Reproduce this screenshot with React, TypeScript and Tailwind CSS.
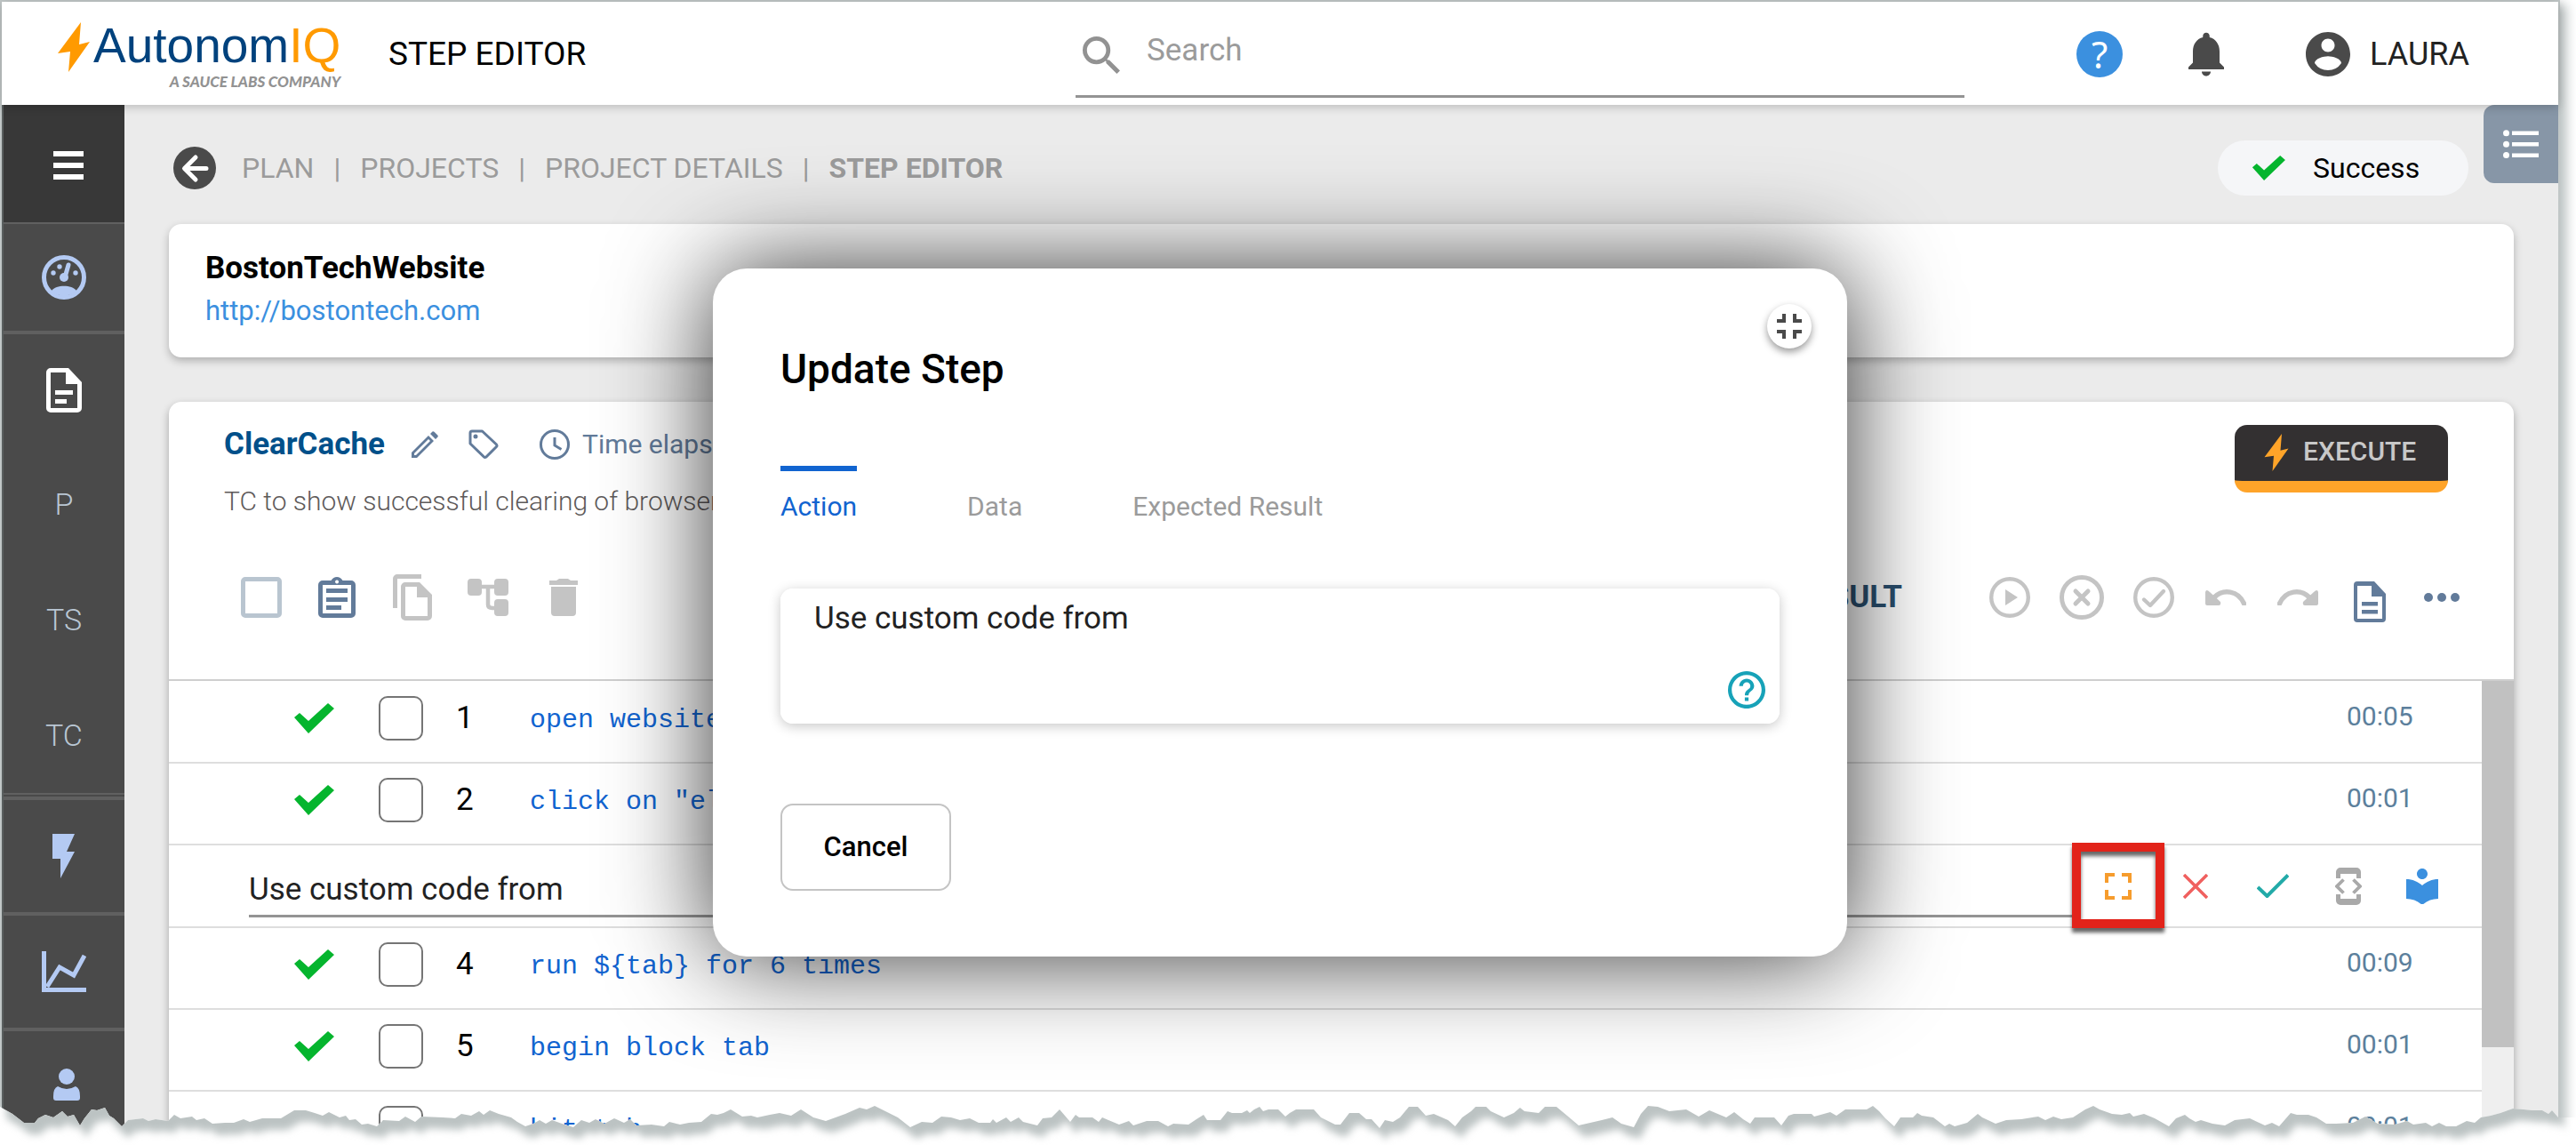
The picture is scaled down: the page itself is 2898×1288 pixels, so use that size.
import React, { type ReactNode } from "react";

type IconProps = { box: string; className: string; children: ReactNode };

function Icon({ box, className, children }: IconProps) {
  return (
    <svg viewBox={box} className={`shrink-0 ${className}`} fill="currentColor" aria-hidden="true">
      {children}
    </svg>
  );
}

function Bolt({ className }: { className: string }) {
  return (
    <Icon box="0 0 36 56" className={className}>
      <path d="M26 0 L0 35 L14 33 L12 56 L36 22 L24 25 Z" />
    </Icon>
  );
}

function CheckMark({ className }: { className: string }) {
  return (
    <Icon box="0 0 46 34" className={className}>
      <path d="M1 16 L7 11 L17 20 L39 0 L46 6 L17 34 Z" />
    </Icon>
  );
}

/* ---------- header ---------- */

function Logo() {
  return (
    <div className="flex items-start pl-[63px] text-[#00427d]">
      <Bolt className="mt-[5px] h-[56px] w-[36px] text-[#ff9a00]" />
      <div className="ml-1 flex flex-col items-end">
        <span className="font-['Liberation_Sans'] text-[55px] leading-[62px]">
          Autonom<span className="text-[#ff9a00]">IQ</span>
        </span>
        <span className="font-[Lato] text-[17px] leading-[20px] font-black italic text-[#929292]">
          A SAUCE LABS COMPANY
        </span>
      </div>
    </div>
  );
}

function Header() {
  return (
    <header className="relative z-10 flex h-[116px] shrink-0 items-center bg-white pt-[2px] shadow-[0_2px_10px_rgba(0,0,0,0.22)]">
      <div className="flex w-[1208px] shrink-0 items-center">
        <div className="w-[435px]">
          <Logo />
        </div>
        <h1 className="text-[37px] leading-[48px] text-black">STEP EDITOR</h1>
      </div>
      <label className="flex h-[106px] flex-1 items-center self-start border-b-[3px] border-[#949494] pt-[4px] pl-[8px]">
        <Icon box="3 3 17.5 17.5" className="mt-[8px] h-[42px] w-[42px] text-[#929292]">
          <path d="M15.5 14h-.79l-.28-.27A6.471 6.471 0 0 0 16 9.5 6.5 6.5 0 1 0 9.5 16c1.61 0 3.09-.59 4.23-1.57l.27.28v.79l5 4.99L20.49 19l-4.99-5zm-6 0C7.01 14 5 11.99 5 9.5S7.01 5 9.5 5 14 7.01 14 9.5 11.99 14 9.5 14z" />
        </Icon>
        <input
          type="text"
          aria-label="Search"
          placeholder="Search"
          className="ml-[30px] h-[50px] min-w-0 flex-1 bg-transparent text-[35px] text-[#222] outline-none placeholder:text-[#9b9b9b]"
        />
      </label>
      <div className="flex w-[668px] shrink-0 items-center pl-[126px]">
        <button type="button" aria-label="Help" className="flex h-[52px] w-[52px] items-center justify-center rounded-full bg-[#3b90df] font-['Noto_Sans'] text-[42px] leading-[52px] text-white">
          ?
        </button>
        <button type="button" aria-label="Notifications" className="ml-[74px]">
          <Icon box="4 2.5 16 19.5" className="h-[50px] w-[40px] text-[#4a4a4a]">
            <path d="M12 22c1.1 0 2-.9 2-2h-4c0 1.1.89 2 2 2zm6-6v-5c0-3.07-1.64-5.64-4.5-6.32V4c0-.83-.67-1.5-1.5-1.5s-1.5.67-1.5 1.5v.68C7.63 5.36 6 7.92 6 11v5l-2 2v1h16v-1l-2-2z" />
          </Icon>
        </button>
        <button type="button" className="ml-[92px] flex items-center text-[36px] leading-[44px] text-[#222]">
          <Icon box="2 2 20 20" className="mr-[22px] h-[50px] w-[50px] text-[#4a4a4a]">
            <path d="M12 2C6.48 2 2 6.48 2 12s4.48 10 10 10 10-4.48 10-10S17.52 2 12 2zm0 3c1.66 0 3 1.34 3 3s-1.34 3-3 3-3-1.34-3-3 1.34-3 3-3zm0 14.2a7.2 7.2 0 0 1-6-3.22c.03-1.99 4-3.08 6-3.08 1.99 0 5.97 1.09 6 3.08a7.2 7.2 0 0 1-6 3.22z" />
          </Icon>
          LAURA
        </button>
      </div>
    </header>
  );
}

/* ---------- side navigation ---------- */

function SideNav() {
  const link = "flex h-[130px] shrink-0 items-center justify-center";
  const ruled = "flex h-[130px] shrink-0 items-center justify-center border-b-4 border-[#606060]";
  return (
    <nav className="flex w-[138px] shrink-0 flex-col border-l-2 border-[#5a5f5f] bg-[#4a4a4a] text-[34px] font-light text-[#b9c6d3]">
      <button type="button" aria-label="Menu" className="flex h-[134px] shrink-0 items-center justify-center border-b-2 border-[#606060] bg-[#383838] pt-[3px] pl-[10px] text-white">
        <Icon box="0 0 34 32" className="h-[32px] w-[34px]">
          <path d="M0 0h34v6H0zM0 13h34v6H0zM0 26h34v6H0z" />
        </Icon>
      </button>
      <a href="#dashboard" aria-label="Dashboard" className="flex h-[124px] shrink-0 items-center justify-center border-b-4 border-[#606060] text-[#b4caf3]">
        <svg viewBox="0 0 50 50" className="h-[50px] w-[50px]" aria-hidden="true">
          <circle cx="25" cy="25" r="22.5" fill="none" stroke="currentColor" strokeWidth="5" />
          <path d="M11 40 C16 33 34 33 39 40 C35 47 15 47 11 40Z" fill="currentColor" />
          <path d="M30 11 L26 25" stroke="currentColor" strokeWidth="5" strokeLinecap="round" />
          <circle cx="25" cy="25" r="5" fill="currentColor" />
          <circle cx="13" cy="20" r="2.7" fill="currentColor" />
          <circle cx="20" cy="13" r="2.7" fill="currentColor" />
          <circle cx="38" cy="20" r="2.7" fill="currentColor" />
        </svg>
      </a>
      <a href="#documents" aria-label="Documents" className="flex h-[126px] shrink-0 items-center justify-center text-white">
        <Icon box="0 0 40 50" className="h-[50px] w-[40px]">
          <path fillRule="evenodd" d="M5 0H25L40 16V45a5 5 0 0 1-5 5H5a5 5 0 0 1-5-5V5a5 5 0 0 1 5-5ZM5 5V45H35V18H22V5Z" />
          <path d="M10 25H30V30H10ZM10 35H23V40H10Z" />
        </Icon>
      </a>
      <a href="#plans" className={link}>P</a>
      <a href="#suites" className={link}>TS</a>
      <a href="#cases" className={link}>TC</a>
      <div className="h-[8px] shrink-0 border-t-2 border-b-4 border-[#606060]" />
      <a href="#runs" aria-label="Executions" className={`${ruled} text-[#b4caf3]`}>
        <Icon box="0 0 26 50" className="h-[50px] w-[26px]">
          <path d="M0 0H25L16 20H25L9 50V28H0Z" />
        </Icon>
      </a>
      <a href="#reports" aria-label="Reports" className={`${ruled} text-[#b4caf3]`}>
        <svg viewBox="0 0 50 46" className="h-[46px] w-[50px]" fill="none" stroke="currentColor" strokeWidth="5" aria-hidden="true">
          <path d="M2.500 0V43.500H50" />
          <path d="M6 40L20 18L36 27L48 5" />
        </svg>
      </a>
      <a href="#account" aria-label="Users" className="flex h-[120px] shrink-0 items-center justify-center pl-[5px] text-[#b4caf3]">
        <Icon box="0 0 30 36" className="h-[36px] w-[30px]">
          <circle cx="15" cy="9" r="9" />
          <path d="M5 20Q15 26 25 20Q30 22 30 31V33a3 3 0 0 1-3 3H3a3 3 0 0 1-3-3V31Q0 22 5 20Z" />
        </Icon>
      </a>
    </nav>
  );
}

/* ---------- breadcrumb ---------- */

function Breadcrumb() {
  return (
    <div className="flex h-[134px] shrink-0 items-center justify-between pt-2">
      <nav aria-label="Breadcrumb" className="flex items-center gap-[22px] text-[32px] leading-[40px] text-[#9b9b9b]">
        <button type="button" aria-label="Back" className="mr-[7px] ml-[5px]">
          <svg viewBox="0 0 48 48" className="h-[48px] w-[48px]" aria-hidden="true">
            <circle cx="24" cy="24" r="24" fill="#4a4a4a" />
            <path d="M37 24.500H13M25 12L12.500 24.500L25 37" fill="none" stroke="#fff" strokeWidth="5" strokeLinecap="round" strokeLinejoin="round" />
          </svg>
        </button>
        <a href="#plan">PLAN</a>
        <span>|</span>
        <a href="#projects">PROJECTS</a>
        <span>|</span>
        <a href="#project-details">PROJECT DETAILS</a>
        <span>|</span>
        <span className="font-bold">STEP EDITOR</span>
      </nav>
      <div className="mr-[51px] flex h-[62px] w-[282px] items-center rounded-full bg-[#f5f6f8] pl-[37px] text-[32px] leading-[40px] text-black">
        <CheckMark className="mr-[30px] h-[28px] w-[40px] text-[#05b52e]" />
        Success
      </div>
    </div>
  );
}

/* ---------- toolbars ---------- */

function Tool({ label, width, children }: { label: string; width: string; children: ReactNode }) {
  return (
    <button type="button" aria-label={label} className={`flex h-[60px] items-center justify-center ${width}`}>
      {children}
    </button>
  );
}

function EditTools() {
  const w = "w-[85px]";
  return (
    <div className="flex items-center pl-[61px] text-[#c4c4c4]">
      <label className="flex w-[85px] items-center justify-center">
        <input type="checkbox" aria-label="Select all steps" className="h-[46px] w-[46px] appearance-none rounded-[5px] border-[5px] border-[#b9c5d0]" />
      </label>
      <Tool label="Paste" width={w}>
        <Icon box="0 0 42 46" className="h-[46px] w-[42px] text-[#627b9a]">
          <path fillRule="evenodd" d="M5 4H14.500Q17 0 21 0T27.500 4H37a5 5 0 0 1 5 5V41a5 5 0 0 1-5 5H5a5 5 0 0 1-5-5V9a5 5 0 0 1 5-5ZM5 9V41H37V9ZM21 3.500a2 2 0 1 0 .1 0Z" />
          <path d="M9 13H33V18H9ZM9 23H33V28H9ZM9 32H26V37H9Z" />
        </Icon>
      </Tool>
      <Tool label="Copy" width={w}>
        <Icon box="0 0 44 52" className="h-[52px] w-[44px]">
          <path d="M5 0H32V5H5V38H0V5a5 5 0 0 1 5-5Z" />
          <path fillRule="evenodd" d="M14 9H30L44 23V47a5 5 0 0 1-5 5H14a5 5 0 0 1-5-5V14a5 5 0 0 1 5-5ZM14 14V47H39V26H27V14Z" />
        </Icon>
      </Tool>
      <Tool label="Add block" width={w}>
        <Icon box="0 0 46 42" className="h-[42px] w-[46px]">
          <rect x="0" y="0" width="16" height="19" rx="4" />
          <rect x="30" y="0" width="16" height="19" rx="4" />
          <rect x="30" y="23" width="16" height="19" rx="4" />
          <path d="M15 9H31M23 9V29Q23 33 28 33H31" fill="none" stroke="currentColor" strokeWidth="4.500" />
        </Icon>
      </Tool>
      <Tool label="Delete" width={w}>
        <Icon box="0 0 32 42" className="h-[42px] w-[32px]">
          <path d="M0 2H8L11 0H21L24 2H32V7H0ZM2 9H30V38a4 4 0 0 1-4 4H6a4 4 0 0 1-4-4Z" />
        </Icon>
      </Tool>
    </div>
  );
}

function RunTools() {
  const w = "w-[81px]";
  const line = { fill: "none", stroke: "currentColor", strokeLinecap: "round", strokeLinejoin: "round" } as const;
  return (
    <div className="flex items-center pr-[41px] text-[#c4c4c4]">
      <span className="mr-[80px] text-[35px] leading-[40px] font-bold text-[#2b5070]">EXPECTED RESULT</span>
      <Tool label="Run" width={w}>
        <Icon box="0 0 46 46" className="h-[46px] w-[46px]">
          <circle cx="23" cy="23" r="20.800" {...line} strokeWidth="4.400" />
          <path d="M18 14L32 23L18 32Z" />
        </Icon>
      </Tool>
      <Tool label="Fail" width={w}>
        <Icon box="0 0 50 50" className="h-[50px] w-[50px]">
          <circle cx="25" cy="25" r="22.500" {...line} strokeWidth="5" />
          <path d="M18 18L32 32M32 18L18 32" {...line} strokeWidth="5" />
        </Icon>
      </Tool>
      <Tool label="Pass" width={w}>
        <Icon box="0 0 46 46" className="h-[46px] w-[46px]">
          <circle cx="23" cy="23" r="20.800" {...line} strokeWidth="4.400" />
          <path d="M12 25.500L19 32L34 16" {...line} strokeWidth="4.400" />
        </Icon>
      </Tool>
      <Tool label="Undo" width={w}>
        <Icon box="0 0 46 18" className="h-[18px] w-[46px]">
          <path d="M0 3Q1 -1 5 3L17 14Q18 18 15 18H2Q0 18 0 16Z" />
          <path d="M10 9C20 -1 37 1 43.500 16" {...line} strokeWidth="5.500" />
        </Icon>
      </Tool>
      <Tool label="Redo" width={w}>
        <Icon box="0 0 46 18" className="h-[18px] w-[46px]">
          <path d="M46 3Q45 -1 41 3L29 14Q28 18 31 18H44Q46 18 46 16Z" />
          <path d="M36 9C26 -1 9 1 2.500 16" {...line} strokeWidth="5.500" />
        </Icon>
      </Tool>
      <Tool label="Notes" width={w}>
        <Icon box="0 0 36 46" className="mt-[10px] h-[46px] w-[36px] text-[#627b9a]">
          <path fillRule="evenodd" d="M4 0H23L36 14V42a4 4 0 0 1-4 4H4a4 4 0 0 1-4-4V4a4 4 0 0 1 4-4ZM4 5V42H32V17H20V5Z" />
          <path d="M9 23H27V27.500H9ZM9 32H27V36.500H9Z" />
        </Icon>
      </Tool>
      <Tool label="More" width={w}>
        <Icon box="0 0 40 10" className="h-[10px] w-[40px] text-[#627b9a]">
          <circle cx="5" cy="5" r="5" />
          <circle cx="20" cy="5" r="5" />
          <circle cx="35" cy="5" r="5" />
        </Icon>
      </Tool>
    </div>
  );
}

/* ---------- steps table ---------- */

type Step = { id: number; text: string; time: string };
const before: Step[] = [
  { id: 1, text: "open website", time: "00:05" },
  { id: 2, text: 'click on "element"', time: "00:01" },
];
const after: Step[] = [
  { id: 4, text: "run ${tab} for 6 times", time: "00:09" },
  { id: 5, text: "begin block tab", time: "00:01" },
  { id: 6, text: "hit tab", time: "00:01" },
];

function StepRow({ step }: { step: Step }) {
  return (
    <tr className="h-[92px] border-b-2 border-[#dedede]">
      <td className="pb-2 pl-[140px]">
        <CheckMark className="h-[34px] w-[46px] text-[#05b52e]" />
      </td>
      <td className="pb-2 pl-[26px]">
        <input type="checkbox" aria-label={`Select step ${step.id}`} className="block h-[50px] w-[50px] appearance-none rounded-[10px] border-2 border-[#757575]" />
      </td>
      <td className="pb-2 pl-[11px] text-[35px] leading-[40px] text-black">{step.id}</td>
      <td className="pb-1 font-['Liberation_Mono'] text-[30px] leading-[40px] whitespace-nowrap text-[#1164d0]">{step.text}</td>
      <td className="pb-3 text-[30px] leading-[36px] text-[#5c7f9c]">{step.time}</td>
    </tr>
  );
}

function EditRow() {
  return (
    <tr className="h-[92px] border-b-2 border-[#dedede]">
      <td colSpan={5} className="p-0">
        <div className="flex h-[91px] items-center pr-[26px] pl-[90px]">
          <input
            type="text"
            aria-label="Step text"
            defaultValue="Use custom code from"
            className="mt-[10px] h-[60px] min-w-0 flex-1 border-b-[3px] border-[#949494] text-[35px] text-[#222] outline-none"
          />
          <button type="button" aria-label="Expand" className="relative flex h-[90px] w-[86px] items-center justify-center text-[#f69c2d]">
            <Icon box="0 0 30 30" className="h-[30px] w-[30px]">
              <path d="M0 0H11V4H4V11H0ZM19 0H30V11H26V4H19ZM0 19H4V26H11V30H0ZM26 19H30V30H19V26H26Z" />
            </Icon>
            <span className="absolute -top-[4px] -right-[9px] -bottom-[2px] -left-[9px] border-[10px] border-[#e2231a] shadow-[0_5px_4px_rgba(0,0,0,0.6),inset_0_5px_4px_rgba(0,0,0,0.6)]" />
          </button>
          <button type="button" aria-label="Discard" className="flex w-[88px] items-center justify-center text-[#f0605f]">
            <Icon box="0 0 28 28" className="h-[28px] w-[28px]">
              <path d="M1 1L27 27M27 1L1 27" stroke="currentColor" strokeWidth="3.500" />
            </Icon>
          </button>
          <button type="button" aria-label="Save" className="flex w-[86px] items-center justify-center text-[#22aaa8]">
            <Icon box="0 0 36 27" className="h-[27px] w-[36px]">
              <path d="M1 15L11.500 25L35 1.500" fill="none" stroke="currentColor" strokeWidth="4" />
            </Icon>
          </button>
          <button type="button" aria-label="Code" className="flex w-[84px] items-center justify-center text-[#a9a9a9]">
            <Icon box="0 0 30 42" className="h-[42px] w-[30px]">
              <path d="M6 0H24a5 5 0 0 1 5 5V12H24V7H6V12H1V5a5 5 0 0 1 5-5ZM1 30H6V35H24V30H29V37a5 5 0 0 1-5 5H6a5 5 0 0 1-5-5Z" />
              <path d="M9.500 13.500L2 21L9.500 28.500M20.500 13.500L28 21L20.500 28.500" fill="none" stroke="currentColor" strokeWidth="3.800" />
            </Icon>
          </button>
          <button type="button" aria-label="Library" className="flex w-[82px] items-center justify-center text-[#3b90df]">
            <Icon box="3 2 18 20" className="h-[40px] w-[36px]">
              <path d="M12 11.550C9.640 9.350 6.480 8 3 8v11c3.480 0 6.640 1.350 9 3.550 2.360-2.190 5.520-3.550 9-3.550V8c-3.480 0-6.640 1.350-9 3.550zM12 8c1.660 0 3-1.340 3-3s-1.340-3-3-3-3 1.340-3 3 1.340 3 3 3z" />
            </Icon>
          </button>
        </div>
      </td>
    </tr>
  );
}

function StepsPanel() {
  return (
    <section className="mt-[50px] flex min-h-0 flex-1 flex-col rounded-t-[14px] bg-white shadow-[0_4px_10px_rgba(0,0,0,0.3)]">
      <div className="flex shrink-0 items-start justify-between pt-[20px] pr-[74px] pl-[62px]">
        <div>
          <div className="flex h-[56px] items-center text-[#627b9a]">
            <h2 className="text-[35px] leading-[44px] font-bold text-[#00508a]">ClearCache</h2>
            <button type="button" aria-label="Rename" className="ml-[30px]">
              <Icon box="0 0 30 30" className="h-[30px] w-[30px]">
                <path fillRule="evenodd" d="M0 24L19 5L25 11L6 30H0ZM3 25V27H5L21 11L19 9ZM21 3L23.500 .5Q24.500 0 25.500 .8L29.500 4.800Q30 5.600 29.500 6.500L27 9Z" />
              </Icon>
            </button>
            <button type="button" aria-label="Tags" className="ml-[34px]">
              <svg viewBox="0 0 34 34" className="h-[34px] w-[34px]" fill="none" stroke="currentColor" strokeWidth="3" strokeLinejoin="round" aria-hidden="true">
                <path d="M2 4Q2 2 4 2H15.500L31.500 17Q32.500 18.500 31.500 19.500L20 31Q18.500 32 17.500 31L2 16Z" />
                <circle cx="8" cy="8" r="1.500" fill="currentColor" strokeWidth="2" />
              </svg>
            </button>
            <svg viewBox="0 0 34 34" className="ml-[46px] h-[34px] w-[34px]" fill="none" stroke="currentColor" strokeWidth="3" aria-hidden="true">
              <circle cx="17" cy="17" r="15.500" />
              <path d="M17 9V18L24.500 22.500" />
            </svg>
            <span className="ml-[14px] text-[30px] leading-[40px]">Time elapsed</span>
          </div>
          <p className="text-[30px] leading-[72px] font-light text-[#5e5a5a]">TC to show successful clearing of browser</p>
        </div>
        <button type="button" className="mt-[6px] flex h-[76px] w-[240px] items-start rounded-[14px] border-b-[13px] border-[#ffa429] bg-[#333031] pt-[10px] pl-[32px] text-[30px] leading-[40px] font-medium text-[#c8c8c8]">
          <Bolt className="mr-[15px] h-[42px] w-[30px] text-[#ffa429]" />
          EXECUTE
        </button>
      </div>
      <div className="flex h-[166px] shrink-0 items-start justify-between border-b-2 border-[#cfcfcf] pt-[42px]">
        <EditTools />
        <RunTools />
      </div>
      <div className="flex min-h-0 flex-1 overflow-hidden">
        <div className="min-w-0 flex-1">
          <table className="w-full table-fixed border-collapse text-left">
            <colgroup>
              <col className="w-[210px]" />
              <col className="w-[102px]" />
              <col className="w-[94px]" />
              <col />
              <col className="w-[152px]" />
            </colgroup>
            <tbody>
              {before.map((s) => <StepRow key={s.id} step={s} />)}
              <EditRow />
              {after.map((s) => <StepRow key={s.id} step={s} />)}
            </tbody>
          </table>
        </div>
        <div className="w-[36px] shrink-0 bg-[#efefef]">
          <div className="h-[412px] bg-[#c1c1c1]" />
        </div>
      </div>
    </section>
  );
}

/* ---------- dialog ---------- */

function UpdateStepDialog() {
  return (
    <div role="dialog" aria-labelledby="dialog-title" className="pointer-events-auto relative w-[1276px] rounded-[38px] bg-white px-[76px] pt-[83px] pb-[74px] shadow-[0_0_116px_rgba(0,0,0,0.8)]">
      <button type="button" aria-label="Collapse" className="absolute top-[40px] right-[40px] flex h-[50px] w-[50px] items-center justify-center rounded-full bg-white text-[#4a4a4a] shadow-[0_4px_9px_rgba(0,0,0,0.4)]">
        <Icon box="0 0 28 28" className="h-[28px] w-[28px]">
          <path d="M6 0H10V10H0V6H6ZM18 0H22V6H28V10H18ZM0 18H10V28H6V22H0ZM18 18H28V22H22V28H18Z" />
        </Icon>
      </button>
      <h2 id="dialog-title" className="text-[46px] leading-[60px] font-medium text-black">Update Step</h2>
      <div role="tablist" className="mt-[79px] flex gap-[124px] text-[30px] leading-[32px] text-[#9b9b9b]">
        <button type="button" role="tab" aria-selected="true" className="border-t-[6px] border-[#1164d0] pt-[24px] text-[#1164d0]">Action</button>
        <button type="button" role="tab" aria-selected="false" className="border-t-[6px] border-transparent pt-[24px]">Data</button>
        <button type="button" role="tab" aria-selected="false" className="border-t-[6px] border-transparent pt-[24px]">Expected Result</button>
      </div>
      <div className="relative mt-[76px] h-[152px] rounded-[14px] shadow-[0_3px_14px_rgba(0,0,0,0.22)]">
        <textarea
          aria-label="Action"
          defaultValue="Use custom code from"
          className="block h-full w-full resize-none rounded-[14px] bg-white px-[38px] pt-[12px] text-[35px] leading-[44px] text-[#222] outline-none"
        />
        <button type="button" aria-label="Action help" className="absolute right-[16px] bottom-[17px]">
          <Icon box="2 2 20 20" className="h-[42px] w-[42px] text-[#17a2b8]">
            <path d="M11 18h2v-2h-2v2zm1-16C6.480 2 2 6.480 2 12s4.480 10 10 10 10-4.480 10-10S17.520 2 12 2zm0 18c-4.410 0-8-3.590-8-8s3.590-8 8-8 8 3.590 8 8-3.590 8-8 8zm0-14c-2.210 0-4 1.790-4 4h2c0-1.100.9-2 2-2s2 .9 2 2c0 2-3 1.750-3 5h2c0-2.250 3-2.500 3-5 0-2.210-1.790-4-4-4z" />
          </Icon>
        </button>
      </div>
      <button type="button" className="mt-[90px] flex h-[98px] w-[192px] items-center justify-center rounded-[14px] border-2 border-[#c4c4c4] text-[31px] leading-[40px] font-medium text-black">
        Cancel
      </button>
    </div>
  );
}

/* ---------- torn paper edge ---------- */

type Profile = { start: number; scale: number; base: number; points: number[][] };

// Height profile of the tear, in thirds of a pixel below each section's base.
const profiles: Profile[] = [
  {
    start: 0, scale: 1.4255, base: -318,
    points: [[0,1155],[10,1168],[20,1180],[38,1208],[55,1208],[62,1195],[72,1183],[85,1190],[100,1170],[108,1187],[118,1183],[128,1218],[135,1195],[147,1165],[155,1168],[168,1157],[175,1185],[182,1195],[195,1222],[205,1200],[230,1195],[238,1203],[250,1197],[270,1203],[280,1183],[290,1195],[308,1188],[315,1200],[328,1195],[340,1212],[360,1208],[375,1210],[390,1198],[400,1205],[420,1193],[450,1195],[472,1168],[490,1168],[505,1177],[518,1185],[528,1172],[545,1190],[555,1186],[560,1200],[570,1197],[580,1215],[590,1212],[605,1220],[615,1200],[640,1203],[650,1188],[665,1207],[675,1187],[710,1190],[730,1193],[740,1180],[755,1185],[768,1170],[775,1182],[785,1168],[800,1180],[820,1190],[830,1205],[842,1222],[855,1213],[865,1200],[875,1212],[885,1200],[905,1215],[920,1225],[932,1200],[945,1210],[955,1198],[970,1213],[985,1195],[1000,1210],[1010,1197],[1020,1218],[1045,1215],[1065,1222],[1073,1205],[1090,1215],[1105,1210],[1125,1207],[1140,1180],[1150,1183],[1160,1175],[1172,1165],[1190,1188],[1205,1185],[1215,1192],[1235,1183],[1250,1175],[1268,1185],[1285,1163],[1305,1190],[1325,1203],[1340,1190],[1355,1180],[1378,1158],[1390,1165],[1402,1153],[1425,1175],[1440,1192],[1460,1225],[1478,1205],[1495,1208],[1510,1188],[1525,1190],[1540,1200],[1555,1195],[1567,1205]],
  },
  {
    start: 1100, scale: 1.568, base: -118,
    points: [[2,610],[22,610],[26,597],[33,610],[50,592],[58,605],[72,592],[80,607],[105,617],[115,593],[130,590],[144,563],[163,605],[172,583],[178,592],[202,592],[213,605],[220,590],[230,600],[250,615],[266,603],[275,618],[298,602],[318,602],[335,622],[345,612],[372,614],[385,597],[398,583],[405,600],[428,600],[440,570],[448,577],[465,575],[475,568],[480,575],[487,565],[497,555],[503,570],[512,563],[530,563],[542,587],[550,575],[562,563],[592,563],[605,590],[630,615],[640,615],[655,575],[672,575],[685,597],[695,597],[708,627],[718,600],[732,605],[745,592],[760,555],[776,555],[790,585],[805,580],[830,600],[842,622],[855,592],[870,570],[878,555],[897,555],[905,570],[928,592],[945,575],[957,558],[965,570],[990,575],[1000,555],[1020,555],[1040,585],[1060,617],[1080,610],[1100,600],[1120,590],[1135,612],[1157,625],[1170,580],[1183,553],[1200,555],[1220,570],[1250,565],[1272,587],[1290,567],[1320,590],[1335,572],[1350,597],[1362,612],[1370,592],[1405,592],[1417,618],[1430,585],[1440,580],[1470,580],[1475,588],[1503,573],[1515,585],[1530,565],[1555,565]],
  },
  {
    start: 2030, scale: 1.8065, base: -318,
    points: [[127,1165],[140,1153],[152,1170],[165,1195],[183,1222],[195,1190],[220,1190],[230,1175],[238,1185],[262,1190],[285,1220],[295,1212],[305,1220],[330,1208],[352,1178],[362,1190],[388,1213],[410,1200],[440,1198],[475,1188],[490,1200],[505,1188],[522,1198],[545,1190],[570,1165],[588,1153],[600,1165],[625,1178],[645,1183],[662,1177],[668,1188],[690,1180],[712,1195],[740,1220],[755,1195],[773,1183],[782,1195],[795,1207],[805,1200],[830,1213],[855,1217],[875,1200],[905,1195],[935,1217],[950,1208],[965,1222],[988,1175],[1000,1183],[1025,1183],[1040,1190],[1060,1213],[1080,1213],[1115,1210],[1140,1188],[1165,1213],[1200,1215],[1225,1203],[1238,1215],[1262,1210],[1275,1222],[1290,1208],[1305,1222],[1325,1222],[1345,1203],[1362,1210],[1375,1190],[1395,1185],[1415,1175],[1440,1160],[1462,1165],[1480,1168],[1500,1168],[1512,1178],[1520,1168],[1532,1190]],
  },
];

const edge = profiles
  .flatMap((p) => p.points.map(([x, y]) => `${Math.round(p.start + x / p.scale)} ${Math.round(y / 3 + p.base)}`))
  .join("L");

function TornEdge() {
  return (
    <svg viewBox="0 0 2898 110" preserveAspectRatio="none" className="pointer-events-none absolute bottom-0 left-0 z-30 h-[110px] w-full" aria-hidden="true">
      <defs>
        <clipPath id="below">
          <path d={`M${edge}H2898V110H0Z`} />
        </clipPath>
        <filter id="soft" x="-5%" y="-50%" width="110%" height="200%">
          <feGaussianBlur stdDeviation="4" />
        </filter>
      </defs>
      <g clipPath="url(#below)">
        <rect width="2898" height="110" fill="#fff" />
        <path d={`M${edge}V-40H0Z`} fill="#bcc3c3" transform="translate(7 13)" filter="url(#soft)" />
      </g>
    </svg>
  );
}

export default function App() {
  return (
    <div className="relative h-screen overflow-hidden bg-white font-[Roboto,sans-serif]">
      <div className="relative mr-[18px] flex h-full flex-col border-t-2 border-r-2 border-l-2 border-[#c1c7c7] bg-[#ebebeb] shadow-[4px_8px_12px_3px_#b9c0c0]">
        <Header />
        <div className="flex min-h-0 flex-1">
          <SideNav />
          <main className="relative flex min-w-0 flex-1 flex-col px-[50px]">
            <button type="button" aria-label="Show outline" className="absolute top-0 right-0 flex h-[88px] w-[84px] items-center justify-center rounded-l-[12px] bg-[#8796a7] text-white">
              <Icon box="0 0 40 32" className="h-[32px] w-[40px]">
                <path d="M10 1.500H40V6H10ZM10 14H40V18.500H10ZM10 26.500H40V31H10Z" />
                <circle cx="3.500" cy="3.700" r="3.500" />
                <circle cx="3.500" cy="16.200" r="3.500" />
                <circle cx="3.500" cy="28.500" r="3.500" />
              </Icon>
            </button>
            <Breadcrumb />
            <section className="h-[150px] shrink-0 rounded-[14px] bg-white pt-[26px] pl-[41px] shadow-[0_4px_10px_rgba(0,0,0,0.25)]">
              <h2 className="text-[35px] leading-[48px] font-bold text-black">BostonTechWebsite</h2>
              <a href="http://bostontech.com" className="text-[31px] leading-[48px] text-[#3b90df]">http://bostontech.com</a>
            </section>
            <StepsPanel />
          </main>
        </div>
        <div className="pointer-events-none absolute inset-0 z-20 flex items-start justify-center overflow-hidden pt-[300px]">
          <UpdateStepDialog />
        </div>
      </div>
      <TornEdge />
    </div>
  );
}
